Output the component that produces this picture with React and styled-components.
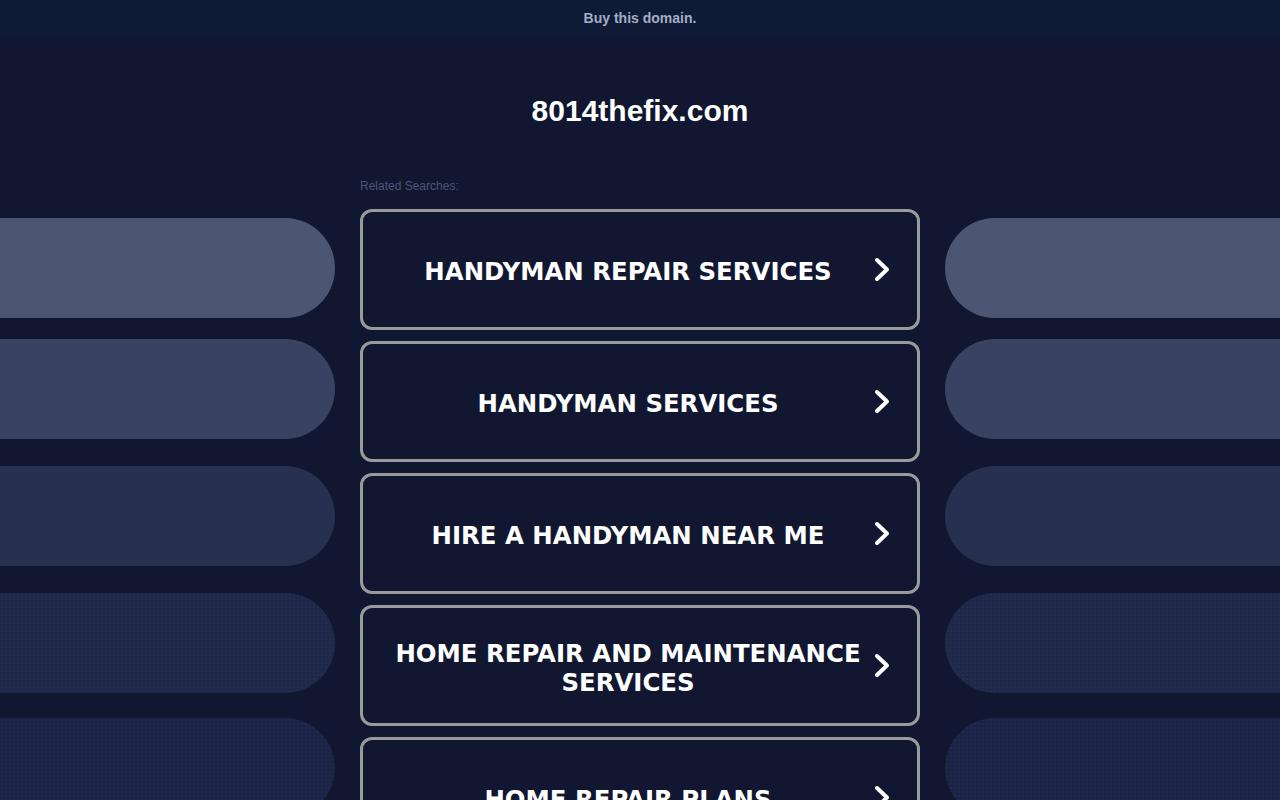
import React from "react"
import styled, { createGlobalStyle } from "styled-components"

const GlobalStyle = createGlobalStyle`
  html, body {
    margin: 0;
    padding: 0;
    background: #111730;
    overflow: hidden;
  }
  body {
    font-family: "Liberation Sans", Arial, sans-serif;
  }
`

const searches = [
  "HANDYMAN REPAIR SERVICES",
  "HANDYMAN SERVICES",
  "HIRE A HANDYMAN NEAR ME",
  "HOME REPAIR AND MAINTENANCE SERVICES",
  "HOME REPAIR PLANS",
]

// gap above each pill differs a little in the original
const pills = [
  { color: "#4c5673", dots: false, gap: 0 },
  { color: "#3a4261", dots: false, gap: 21 },
  { color: "#28304f", dots: false, gap: 27 },
  { color: "#1f2849", dots: true, gap: 27 },
  { color: "#1b2446", dots: true, gap: 25 },
]

function Chevron() {
  return (
    <svg width="16" height="25" viewBox="0 0 16 25">
      <polyline
        points="3,3 13,12.5 3,22"
        fill="none"
        stroke="#fff"
        strokeWidth="4"
        strokeLinecap="round"
        strokeLinejoin="round"
      />
    </svg>
  )
}

function SideColumn({ side }) {
  return (
    <Side>
      {pills.map((p, i) => (
        <Pill key={i} $side={side} $color={p.color} $dots={p.dots} $gap={p.gap} />
      ))}
    </Side>
  )
}

export default function App() {
  return (
    <Page>
      <GlobalStyle />
      <TopBar>Buy this domain.</TopBar>
      <Title>8014thefix.com</Title>
      <Layout>
        <SideColumn side="left" />
        <Center>
          <Label>Related Searches:</Label>
          <List>
            {searches.map((s) => (
              <Card key={s}>
                <CardText>{s}</CardText>
                <Chevron />
              </Card>
            ))}
          </List>
        </Center>
        <SideColumn side="right" />
      </Layout>
    </Page>
  )
}

const Page = styled.div`
  height: 100vh;
  overflow: hidden;
  background: #111730;
`

const TopBar = styled.div`
  height: 35px;
  background: #0f1a36;
  color: #a3aec4;
  font-size: 14px;
  font-weight: bold;
  text-align: center;
  line-height: 37px;
`

const Title = styled.h1`
  margin: 59px 0 0;
  font-size: 30px;
  line-height: 34px;
  font-weight: bold;
  color: #ffffff;
  text-align: center;
`

const Layout = styled.div`
  margin-top: 47px;
  display: grid;
  grid-template-columns: 1fr 560px 1fr;
  column-gap: 25px;
`

const Side = styled.div`
  padding-top: 43px;
  display: flex;
  flex-direction: column;
`

const Pill = styled.div`
  height: 100px;
  margin-top: ${(p) => p.$gap}px;
  background-color: ${(p) => p.$color};
  background-image: ${(p) =>
    p.$dots
      ? "radial-gradient(rgba(70, 85, 130, 0.18) 0.6px, transparent 0.9px)"
      : "none"};
  background-size: 4px 4px;
  border-radius: ${(p) => (p.$side === "left" ? "0 50px 50px 0" : "50px 0 0 50px")};
`

const Center = styled.div`
  display: flex;
  flex-direction: column;
`

const Label = styled.div`
  font-size: 12px;
  line-height: 22px;
  color: #4b5679;
  margin-bottom: 12px;
`

const List = styled.div`
  display: flex;
  flex-direction: column;
  gap: 11px;
`

const Card = styled.a`
  box-sizing: border-box;
  height: 121px;
  border: 3px solid #9a9a9a;
  border-radius: 12px;
  display: flex;
  align-items: center;
  padding: 0 27px;
  gap: 8px;
  color: #fff;
  text-decoration: none;
  cursor: pointer;
  svg {
    flex-shrink: 0;
  }
`

const CardText = styled.span`
  flex: 1;
  padding-top: 4px;
  text-align: center;
  font-family: "DejaVu Sans", Verdana, sans-serif;
  font-weight: bold;
  font-size: 24.4px;
  line-height: 29px;
  color: #fff;
`
